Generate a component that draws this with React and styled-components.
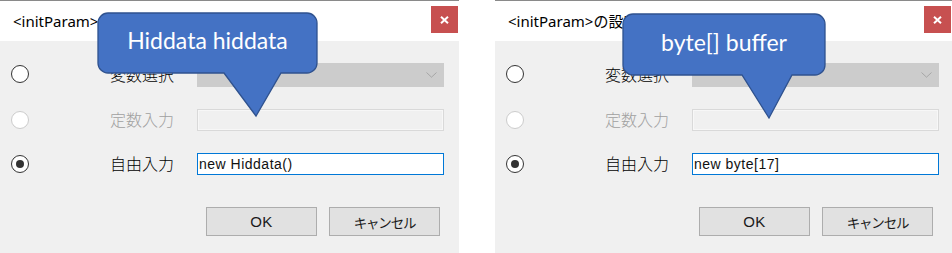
import React from "react";
import styled, { createGlobalStyle } from "styled-components";

const Global = createGlobalStyle`
  html, body { margin: 0; padding: 0; background: #ffffff; }
  body { font-family: "Noto Sans", "Noto Sans CJK JP", sans-serif; }
`;

const Page = styled.div`
  display: flex;
  align-items: flex-start;
  gap: 36px;
  width: 952px;
  height: 253px;
  overflow: hidden;
`;

const Dialog = styled.div`
  position: relative;
  width: ${(p) => p.$w}px;
  height: 253px;
  display: flex;
  flex-direction: column;
  border-top: 1px solid #8a8a8a;
  box-sizing: border-box;
`;

const TitleBar = styled.div`
  height: 40px;
  background: #ffffff;
  display: flex;
  align-items: center;
  justify-content: space-between;
  padding-left: 13px;
  padding-right: 1px;
`;

const Title = styled.div`
  font-family: "Noto Sans", "Noto Sans CJK JP", sans-serif;
  font-size: 15px;
  color: #000;
  white-space: nowrap;
  margin-top: -2px;
`;

const CloseBtn = styled.div`
  width: 27px;
  height: 27px;
  background: #c75050;
  display: flex;
  align-items: center;
  justify-content: center;
  margin-top: -3px;
`;

const Body = styled.div`
  flex: 1;
  background: #f0f0f0;
  padding: 22px 19px 0 11px;
  display: flex;
  flex-direction: column;
`;

const Fields = styled.div`
  display: grid;
  grid-template-columns: 99px 87px 247px;
  grid-template-rows: 24px 22px 22px;
  row-gap: 22px;
  align-items: center;
`;

const Radio = styled.div`
  width: 18px;
  height: 18px;
  box-sizing: border-box;
  border-radius: 50%;
  border: 1px solid ${(p) => (p.$disabled ? "#cccccc" : "#333333")};
  background: #ffffff;
  display: flex;
  align-items: center;
  justify-content: center;
  margin-top: ${(p) => p.$shift || 0}px;
  &::after {
    content: "";
    display: ${(p) => (p.$checked ? "block" : "none")};
    width: 8px;
    height: 8px;
    border-radius: 50%;
    background: #333333;
  }
`;

const Label = styled.div`
  font-family: "Noto Sans CJK JP", sans-serif;
  font-weight: 300;
  font-size: 16px;
  line-height: 20px;
  margin-top: -3px;
  color: ${(p) => (p.$disabled ? "#a0a0a0" : "#000000")};
  white-space: nowrap;
`;

const Combo = styled.div`
  height: 24px;
  background: #cccccc;
  display: flex;
  align-items: center;
  justify-content: flex-end;
  padding-right: 7px;
`;

const TextBox = styled.div`
  height: 22px;
  box-sizing: border-box;
  border: 1px solid ${(p) => (p.$active ? "#0078d7" : "#d9d9d9")};
  background: ${(p) => (p.$active ? "#ffffff" : "#f0f0f0")};
  box-shadow: ${(p) => (p.$active ? "none" : "inset 0 0 0 1px #f7f7f7")};
  font-family: "Liberation Sans", sans-serif;
  font-size: 14px;
  letter-spacing: 0.5px;
  color: #111;
  display: flex;
  align-items: center;
  padding-left: 1px;
  white-space: nowrap;
`;

const ButtonBar = styled.div`
  display: flex;
  justify-content: flex-end;
  gap: 12px;
  margin-top: 32px;
`;

const Button = styled.div`
  width: 111px;
  height: 29px;
  box-sizing: border-box;
  background: #e1e1e1;
  border: 1px solid #adadad;
  display: flex;
  align-items: center;
  justify-content: center;
  font-family: ${(p) =>
    p.$jp ? `"Noto Sans CJK JP", sans-serif` : `"Liberation Sans", sans-serif`};
  font-weight: 400;
  font-size: ${(p) => (p.$jp ? "13.5px" : "15px")};
  letter-spacing: ${(p) => (p.$jp ? "-1.2px" : "0.5px")};
  color: #1a1a1a;
`;

const Callout = styled.div`
  position: absolute;
  left: ${(p) => p.$x}px;
  top: ${(p) => p.$y}px;
  width: ${(p) => p.$w + 2}px;
  height: ${(p) => p.$tipY + 2}px;
  pointer-events: none;
`;

const CalloutShape = styled.svg`
  position: absolute;
  left: 0;
  top: 0;
  overflow: visible;
`;

const CalloutText = styled.div`
  position: absolute;
  left: 1px;
  top: 1px;
  width: ${(p) => p.$w}px;
  height: ${(p) => p.$h}px;
  display: flex;
  align-items: center;
  justify-content: center;
  font-family: "Lato", "Noto Sans", sans-serif;
  font-size: 23px;
  color: #ffffff;
  white-space: nowrap;
  padding-bottom: 6px;
  box-sizing: border-box;
`;

function Bubble({ x, y, w, h, b1, b2, tipX, tipY, text }) {
  const r = 10;
  const d = `M${r},0 H${w - r} A${r},${r} 0 0 1 ${w},${r} V${h - r} A${r},${r} 0 0 1 ${w - r},${h} H${b2} L${tipX},${tipY} L${b1},${h} H${r} A${r},${r} 0 0 1 0,${h - r} V${r} A${r},${r} 0 0 1 ${r},0 Z`;
  return (
    <Callout $x={x} $y={y} $w={w} $tipY={tipY}>
      <CalloutShape width={w + 2} height={tipY + 2}>
        <path
          d={d}
          transform="translate(1,1)"
          fill="#4472c4"
          stroke="#2f528f"
          strokeWidth="1.3"
          strokeLinejoin="miter"
        />
      </CalloutShape>
      <CalloutText $w={w} $h={h}>
        {text}
      </CalloutText>
    </Callout>
  );
}

function Chevron() {
  return (
    <svg width="11" height="6" viewBox="0 0 11 6">
      <path d="M0.5,0.5 L5.5,5.2 L10.5,0.5" fill="none" stroke="#a6a6a6" strokeWidth="1" />
    </svg>
  );
}

function CloseIcon() {
  return (
    <svg width="9" height="8" viewBox="0 0 9 8">
      <path d="M1,0.8 L8,7.2 M8,0.8 L1,7.2" stroke="#ffffff" strokeWidth="2" />
    </svg>
  );
}

function ParamDialog({ width, title, value, bubble }) {
  return (
    <Dialog $w={width}>
      <TitleBar>
        <Title>{title}</Title>
        <CloseBtn>
          <CloseIcon />
        </CloseBtn>
      </TitleBar>
      <Body>
        <Fields>
          <Radio $shift={-3} />
          <Label>変数選択</Label>
          <Combo>
            <Chevron />
          </Combo>

          <Radio $disabled $shift={-1} />
          <Label $disabled>定数入力</Label>
          <TextBox />

          <Radio $checked />
          <Label>自由入力</Label>
          <TextBox $active>{value}</TextBox>
        </Fields>
        <ButtonBar>
          <Button>OK</Button>
          <Button $jp>キャンセル</Button>
        </ButtonBar>
      </Body>
      <Bubble {...bubble} />
    </Dialog>
  );
}

export default function App() {
  return (
    <>
      <Global />
      <Page>
        <ParamDialog
          width={459}
          title="<initParam>の設定"
          value="new Hiddata()"
          bubble={{ x: 97, y: 11, w: 219, h: 60, b1: 126, b2: 183, tipX: 158, tipY: 103, text: "Hiddata hiddata" }}
        />
        <ParamDialog
          width={457}
          title="<initParam>の設定"
          value="new byte[17]"
          bubble={{ x: 127, y: 12, w: 202, h: 61, b1: 119, b2: 169, tipX: 146, tipY: 104, text: "byte[] buffer" }}
        />
      </Page>
    </>
  );
}
